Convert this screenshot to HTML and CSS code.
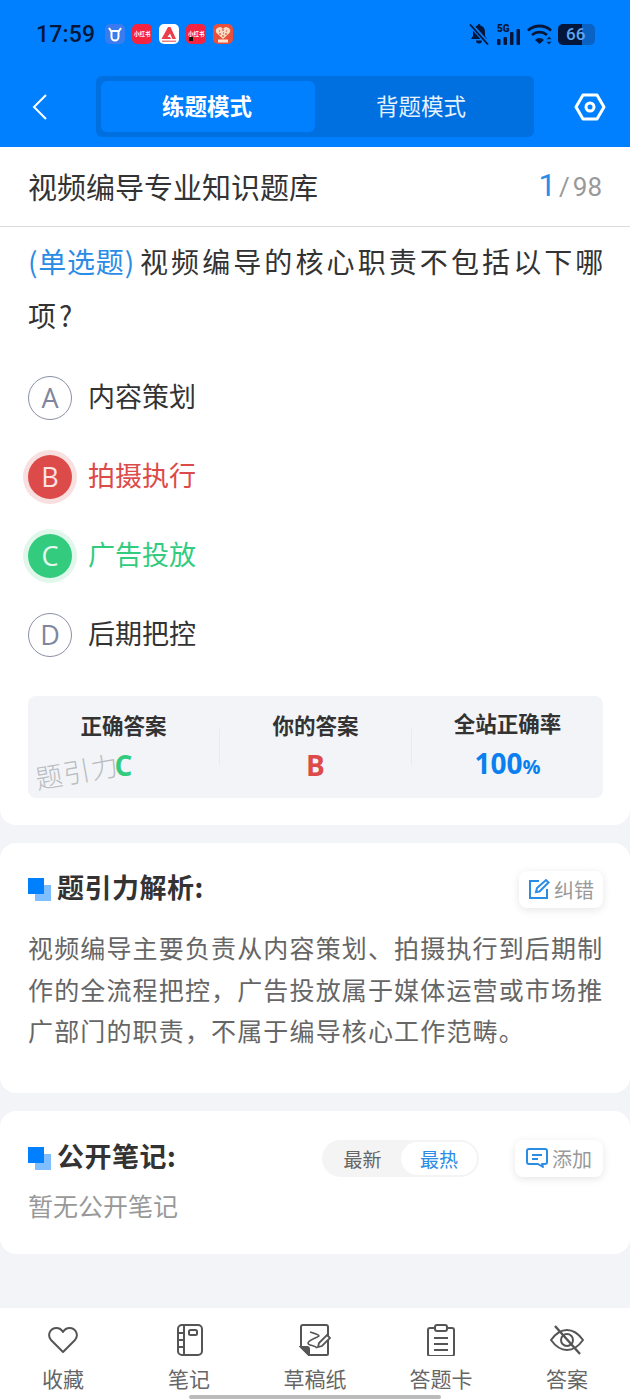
FILE: index.html
```html
<!DOCTYPE html>
<html lang="zh">
<head>
  <meta charset="UTF-8">
  <title>练题模式</title>
  <link rel="stylesheet" href="styles.css">
</head>
<body>
<div class="page">

  <!-- header -->
  <div class="header">
    <div class="status">
      <span class="time">17:59</span>
      <div class="apps">
        <span class="app app-blue"><svg width="16" height="16" viewBox="0 0 16 16" fill="none" stroke="#fff" stroke-width="2"><path d="M2 2l2 3h8l2-3"/><path d="M4.500 5v6a3.500 3.500 0 0 0 7 0V5"/></svg></span>
        <span class="app app-red">小红书</span>
        <span class="app app-white"><svg width="20" height="20" viewBox="0 0 20 20"><path d="M2.500 15L9 3h2.500L17 15h-3.500L11 9.500 8.500 13H11l1 2z" fill="#ea3f4b"/><rect x="3" y="16.500" width="14" height="1.500" fill="#ea7f86"/></svg></span>
        <span class="app app-red app-dot">小红书</span>
        <span class="app app-orange"><svg width="20" height="20" viewBox="0 0 20 20"><path d="M10 15L3.500 9a3.300 3.300 0 0 1 6.500-4 3.300 3.300 0 0 1 6.500 4z" fill="#f6d9c0"/><path d="M6 7h1M9 6h2M13 7h1M6 10h2M10 9h1M12 10h2M9 12h2" stroke="#d8402f" stroke-width="1"/><rect x="5" y="15.500" width="10" height="3" fill="#fbe6d0"/></svg></span>
      </div>
      <div class="sys">
        <svg class="bell" width="20" height="21" viewBox="0 0 20 21" fill="#04173a"><path d="M10 0a1.500 1.500 0 0 1 1.500 1.500c3 .8 4.500 3.300 4.500 6.500v4l2 3H2l2-3V8c0-3.200 1.500-5.700 4.500-6.500A1.500 1.500 0 0 1 10 0z"/><path d="M7 16.500h6a3 3 0 0 1-6 0z"/><path d="M1 0l18 20" stroke="#0080ff" stroke-width="4.500"/><path d="M1 .5l18 20" stroke="#04173a" stroke-width="1.800"/></svg>
        <span class="signal">
          <span class="five-g">5G</span>
          <svg width="25" height="21" viewBox="0 0 25 21" fill="#04173a"><rect x="2" y="15" width="3.500" height="6" rx="1"/><rect x="8.500" y="13" width="3.500" height="8" rx="1"/><rect x="15" y="8" width="3.500" height="13" rx="1"/><rect x="21.500" y="5" width="3.500" height="16" rx="1"/></svg>
        </span>
        <svg class="wifi" width="26" height="21" viewBox="0 0 26 21" fill="none" stroke="#04173a" stroke-width="2.800"><path d="M1 6.500a17 17 0 0 1 23 0"/><path d="M5 11a11.500 11.500 0 0 1 15 0"/><path d="M8 16a6 6 0 0 1 9 0l-4.500 4z" fill="#04173a" stroke-width="0"/><path d="M19 15.500l3-3 3 3zM19 17.500l3 3 3-3z" fill="#04173a" stroke="#0080ff" stroke-width=".6"/></svg>
        <span class="battery"><span class="battery-fill"></span><span class="battery-num">66</span></span>
      </div>
    </div>
    <div class="nav">
      <svg class="back" width="16" height="28" viewBox="0 0 16 28" fill="none" stroke="#fff" stroke-width="2"><path d="M14 2L2 14l12 12"/></svg>
      <div class="tabs">
        <div class="tab tab-on">练题模式</div>
        <div class="tab">背题模式</div>
      </div>
      <svg class="gear" width="32" height="28" viewBox="0 0 32 28" fill="none" stroke="#fff" stroke-width="3"><path d="M9 2h14l7 12-7 12H9L2 14z" stroke-linejoin="round"/><circle cx="16" cy="14" r="4"/></svg>
    </div>
  </div>

  <!-- question -->
  <div class="card card-question">
    <div class="title-row">
      <span class="title">视频编导专业知识题库</span>
      <span class="count"><b>1</b><i>/</i>98</span>
    </div>
    <div class="question"><span class="qtype">(单选题)</span><span>视频编导的核心职责不包括以下哪</span><span>项?</span></div>

    <div class="options">
      <div class="option"><span class="circle">A</span><span class="opt-text">内容策划</span></div>
      <div class="option wrong"><span class="circle">B</span><span class="opt-text">拍摄执行</span></div>
      <div class="option right"><span class="circle">C</span><span class="opt-text">广告投放</span></div>
      <div class="option"><span class="circle">D</span><span class="opt-text">后期把控</span></div>
    </div>

    <div class="stats">
      <div class="stat">
        <div class="stat-label">正确答案</div>
        <div class="stat-value green">C</div>
        <span class="watermark">题引力</span>
      </div>
      <div class="stat">
        <div class="stat-label">你的答案</div>
        <div class="stat-value red">B</div>
      </div>
      <div class="stat">
        <div class="stat-label">全站正确率</div>
        <div class="stat-value blue">100<small>%</small></div>
      </div>
    </div>
  </div>

  <!-- analysis -->
  <div class="card card-analysis">
    <div class="sec-head">
      <span class="squares"></span>
      <span class="sec-title">题引力解析:</span>
      <span class="chip">
        <svg width="22" height="22" viewBox="0 0 22 22" fill="none" stroke="#2b8ce6" stroke-width="2"><path d="M11 3H2v17h17v-9"/><path d="M8 14l1-4 9-8 2.500 2.500-9 9z"/></svg>
        纠错
      </span>
    </div>
    <p class="analysis">视频编导主要负责从内容策划、拍摄执行到后期制作的全流程把控，广告投放属于媒体运营或市场推广部门的职责，不属于编导核心工作范畴。</p>
  </div>

  <!-- notes -->
  <div class="card card-notes">
    <div class="sec-head">
      <span class="squares"></span>
      <span class="sec-title">公开笔记:</span>
      <div class="switch">
        <span class="switch-item">最新</span>
        <span class="switch-item switch-on">最热</span>
      </div>
      <span class="chip chip-add">
        <svg width="22" height="20" viewBox="0 0 22 20" fill="none" stroke="#2b8ce6" stroke-width="2"><path d="M3 1h16a2 2 0 0 1 2 2v11a2 2 0 0 1-2 2h-3l1 3-5-3H3a2 2 0 0 1-2-2V3a2 2 0 0 1 2-2z" stroke-linejoin="round"/><path d="M6 7h10M6 11h6"/></svg>
        添加
      </span>
    </div>
    <div class="empty">暂无公开笔记</div>
  </div>

  <!-- bottom bar -->
  <div class="tabbar">
    <div class="bar-item">
      <svg width="32" height="32" viewBox="0 0 32 32" fill="none" stroke="#555" stroke-width="2"><path d="M16 28L4 16C0 11 3 4 9.500 4c3 0 5 1.500 6.500 4 1.500-2.500 3.500-4 6.500-4C29 4 32 11 28 16z" stroke-linejoin="round"/></svg>
      <span>收藏</span>
    </div>
    <div class="bar-item">
      <svg width="32" height="32" viewBox="0 0 32 32" fill="none" stroke="#555" stroke-width="2"><rect x="5" y="1" width="24" height="30" rx="4"/><path d="M11 1v30M5 9h6M5 16h6M5 23h6"/><rect x="16" y="6" width="8" height="5" rx="1.500"/></svg>
      <span>笔记</span>
    </div>
    <div class="bar-item">
      <svg width="32" height="32" viewBox="0 0 32 32" fill="none" stroke="#555" stroke-width="2"><path d="M4 1h23a2 2 0 0 1 2 2v27a1 1 0 0 1-1 1H10l-8-8V3a2 2 0 0 1 2-2z" stroke-linejoin="round"/><path d="M2 23h6a2 2 0 0 1 2 2v6z" fill="#555"/><path d="M11 8c4 1 9 3 9 4s-11 4-11 7 7 2 9 5" stroke-width="1.600"/><path d="M19 23l1-4 8-8 3 3-8 8z" fill="#fff" stroke-width="1.800"/></svg>
      <span>草稿纸</span>
    </div>
    <div class="bar-item">
      <svg width="32" height="32" viewBox="0 0 32 32" fill="none" stroke="#555" stroke-width="2"><path d="M9 4H5a2 2 0 0 0-2 2v24a2 2 0 0 0 2 2h22a2 2 0 0 0 2-2V6a2 2 0 0 0-2-2h-4"/><rect x="10" y="1" width="12" height="6" rx="2"/><path d="M9 14h14M9 20h14M9 26h14"/></svg>
      <span>答题卡</span>
    </div>
    <div class="bar-item">
      <svg width="34" height="32" viewBox="0 0 34 32" fill="none" stroke="#555" stroke-width="2"><path d="M1 16C6 9 11 6 17 6s11 3 16 10c-5 7-10 10-16 10S6 23 1 16z" stroke-linejoin="round"/><circle cx="17" cy="16" r="6"/><path d="M5 2l25 28" stroke-width="2.400"/></svg>
      <span>答案</span>
    </div>
    <div class="home-bar"></div>
  </div>

</div>
</body>
</html>
```

FILE: styles.css
```css
* {
  box-sizing: border-box;
}
body {
  margin: 0;
  font-family: "Noto Sans CJK SC", "Noto Sans", sans-serif;
  background: #f2f4f7;
  color: #333;
}
.page {
  width: 630px;
  height: 1400px;
  overflow: hidden;
  display: flex;
  flex-direction: column;
  position: relative;
}

/* header */
.header {
  background: #0080ff;
  height: 147px;
  flex-shrink: 0;
}
.status {
  height: 76px;
  padding: 19px 35px 0 36px;
  display: flex;
  align-items: flex-start;
}
.time {
  font-family: "Roboto", sans-serif;
  font-size: 23px;
  line-height: 32px;
  font-weight: 500;
  color: #04173a;
  letter-spacing: 0.2px;
}
.apps {
  display: flex;
  gap: 7px;
  margin: 5px 0 0 10px;
}
.app {
  position: relative;
  width: 20px;
  height: 20px;
  border-radius: 5px;
  overflow: hidden;
  display: flex;
  align-items: center;
  justify-content: center;
  font-size: 5.500px;
  font-weight: 700;
  color: #fff;
  white-space: nowrap;
}
.app-blue { background: #3a7cf0; }
.app-red { background: #f4233f; }
.app-white { background: #fff; }
.app-orange { background: #e8503c; }
.app-dot::after {
  content: "";
  position: absolute;
  left: 3px;
  bottom: 3px;
  width: 4px;
  height: 4px;
  background: #111;
}
.sys {
  margin-left: auto;
  display: flex;
  align-items: flex-start;
  padding-top: 5px;
}
.signal {
  position: relative;
  display: block;
  width: 25px;
  height: 21px;
  margin-left: 6px;
}
.five-g {
  position: absolute;
  left: 2px;
  top: 0;
  font-family: "Roboto", sans-serif;
  font-size: 10px;
  line-height: 9px;
  font-weight: 900;
  color: #04173a;
}
.signal svg {
  display: block;
}
.wifi {
  margin-left: 7px;
}
.battery {
  position: relative;
  width: 37px;
  height: 21px;
  border-radius: 5px;
  background: #0a62c4;
  overflow: hidden;
  margin-left: 5px;
}
.battery-fill {
  position: absolute;
  left: 0;
  top: 0;
  bottom: 0;
  width: 66%;
  background: #04173a;
}
.battery-num {
  position: absolute;
  left: 8px;
  top: 0;
  font-family: "Roboto", sans-serif;
  font-size: 17px;
  line-height: 21px;
  font-weight: 500;
  color: #5ca6f0;
}
.nav {
  display: flex;
  align-items: center;
  height: 61px;
}
.back {
  margin-left: 32px;
}
.tabs {
  margin-left: 48px;
  width: 438px;
  height: 61px;
  background: #006fdf;
  border-radius: 6px;
  padding: 5px;
  display: flex;
}
.tab {
  flex: 1;
  display: flex;
  align-items: center;
  justify-content: center;
  font-size: 22.500px;
  color: #e6f2ff;
  border-radius: 6px;
  padding: 0 2px 4px 0;
}
.tab-on {
  flex: 0 0 214px;
  background: #0080ff;
  color: #fff;
  font-weight: 700;
}
.gear {
  margin-left: 40px;
}

/* cards */
.card {
  background: #fff;
  flex-shrink: 0;
}
.card-question {
  height: 678px;
  border-radius: 0 0 16px 16px;
}
.title-row {
  height: 80px;
  padding: 0 28px 2px;
  border-bottom: 1px solid #dcdcdc;
  display: flex;
  align-items: center;
  justify-content: space-between;
}
.title {
  font-size: 29px;
  color: #333;
}
.count {
  font-family: "Roboto", sans-serif;
  font-size: 26px;
  color: #999;
}
.count b {
  font-size: 31px;
  font-weight: 400;
  color: #2b8ce6;
}
.count i {
  font-style: normal;
  margin: 0 3px;
}
.question {
  padding: 7px 18px 0 28px;
  font-size: 28px;
  line-height: 54px;
  letter-spacing: 3.100px;
  color: #333;
}
.qtype {
  color: #2b8ce6;
  letter-spacing: 0.800px;
  margin-right: 5px;
}
.options {
  margin-top: 16px;
}
.option {
  height: 79px;
  padding-left: 28px;
  display: flex;
  align-items: center;
  gap: 16px;
  font-size: 27px;
  color: #333;
}
.opt-text {
  margin-bottom: 4px;
}
.circle {
  width: 44px;
  height: 44px;
  border-radius: 50%;
  border: 1px solid #8a90a8;
  display: flex;
  align-items: center;
  justify-content: center;
  font-family: "Open Sans", sans-serif;
  font-size: 27px;
  color: #7f86a0;
}
.wrong { color: #dd4a4a; }
.wrong .circle {
  background: #dd4a4a;
  border: 0;
  color: #fbe3e3;
  box-shadow: 0 0 0 5px #f9e0e0;
}
.right { color: #33cc7f; }
.right .circle {
  background: #33cc7f;
  border: 0;
  color: #e6f9ef;
  box-shadow: 0 0 0 5px #e2f7ec;
}
.stats {
  margin: 22px 27px 0 28px;
  height: 102px;
  background: #f2f4f7;
  border-radius: 8px;
  display: flex;
  align-items: center;
}
.stat {
  flex: 1;
  position: relative;
  text-align: center;
  border-left: 1px solid #e8eaee;
  height: 36px;
  display: flex;
  flex-direction: column;
  align-items: center;
  justify-content: center;
}
.stat:first-child {
  border-left: 0;
}
.stat-label {
  font-size: 21.500px;
  line-height: 30px;
  font-weight: 700;
  color: #333;
  white-space: nowrap;
  margin-bottom: 6px;
}
.stat-value {
  font-family: "Open Sans", sans-serif;
  font-size: 28px;
  line-height: 38px;
  font-weight: 700;
}
.stat-value small {
  font-size: 20px;
}
.green { color: #33cc7f; }
.red { color: #dd4a4a; }
.blue { color: #0a80f0; }
.watermark {
  position: absolute;
  left: 7px;
  top: 24px;
  font-size: 27px;
  line-height: 36px;
  letter-spacing: 1px;
  color: #b9bcc0;
  transform: rotate(-10deg);
  white-space: nowrap;
  font-weight: 300;
}

.card-analysis {
  margin-top: 18px;
  height: 250px;
  border-radius: 16px;
  padding: 27px 27px 0 28px;
}
.card-notes {
  margin-top: 18px;
  height: 143px;
  border-radius: 16px;
  padding: 28px 27px 0 28px;
}
.sec-head {
  display: flex;
  align-items: center;
  height: 38px;
}
.squares {
  position: relative;
  width: 23px;
  height: 23px;
  margin-right: 6px;
  flex-shrink: 0;
}
.squares::before,
.squares::after {
  content: "";
  position: absolute;
  width: 16px;
  height: 16px;
}
.squares::before {
  right: 0;
  bottom: 0;
  background: #80bfff;
}
.squares::after {
  left: 0;
  top: 0;
  background: #0080ff;
}
.sec-title {
  font-size: 27px;
  line-height: 36px;
  font-weight: 700;
  letter-spacing: 0.500px;
  color: #333;
  padding-bottom: 4px;
  height: 40px;
}
.chip {
  margin-left: auto;
  height: 37px;
  width: 84px;
  border-radius: 8px;
  background: #fff;
  box-shadow: 0 2px 8px rgba(0, 0, 0, 0.1);
  display: flex;
  align-items: center;
  justify-content: center;
  gap: 4px;
  font-size: 20px;
  color: #999;
}
.chip-add {
  margin-left: 36px;
  width: 88px;
}
.analysis {
  margin: 19px -7px 0 0;
  font-size: 25px;
  line-height: 41.500px;
  letter-spacing: 1.150px;
  color: #666;
}
.switch {
  margin-left: auto;
  width: 157px;
  height: 37px;
  border-radius: 19px;
  background: #f4f4f4;
  padding: 2px;
  display: flex;
  align-items: center;
}
.switch-item {
  flex: 1;
  height: 33px;
  border-radius: 17px;
  display: flex;
  align-items: center;
  justify-content: center;
  font-size: 19px;
  color: #666;
}
.switch-on {
  flex: 0 0 76px;
  background: #fff;
  color: #2b8ce6;
}
.empty {
  margin-top: 10px;
  font-size: 25px;
  line-height: 36px;
  color: #999;
}

/* bottom bar */
.tabbar {
  margin-top: auto;
  height: 92px;
  flex-shrink: 0;
  background: #fff;
  display: flex;
  padding-top: 16px;
  position: relative;
}
.bar-item {
  flex: 1;
  display: flex;
  flex-direction: column;
  align-items: center;
  gap: 8px;
  font-size: 21px;
  line-height: 28px;
  color: #666;
}
.home-bar {
  position: absolute;
  left: 189px;
  bottom: 1px;
  width: 252px;
  height: 4px;
  border-radius: 2px;
  background: #bbb;
}
```
